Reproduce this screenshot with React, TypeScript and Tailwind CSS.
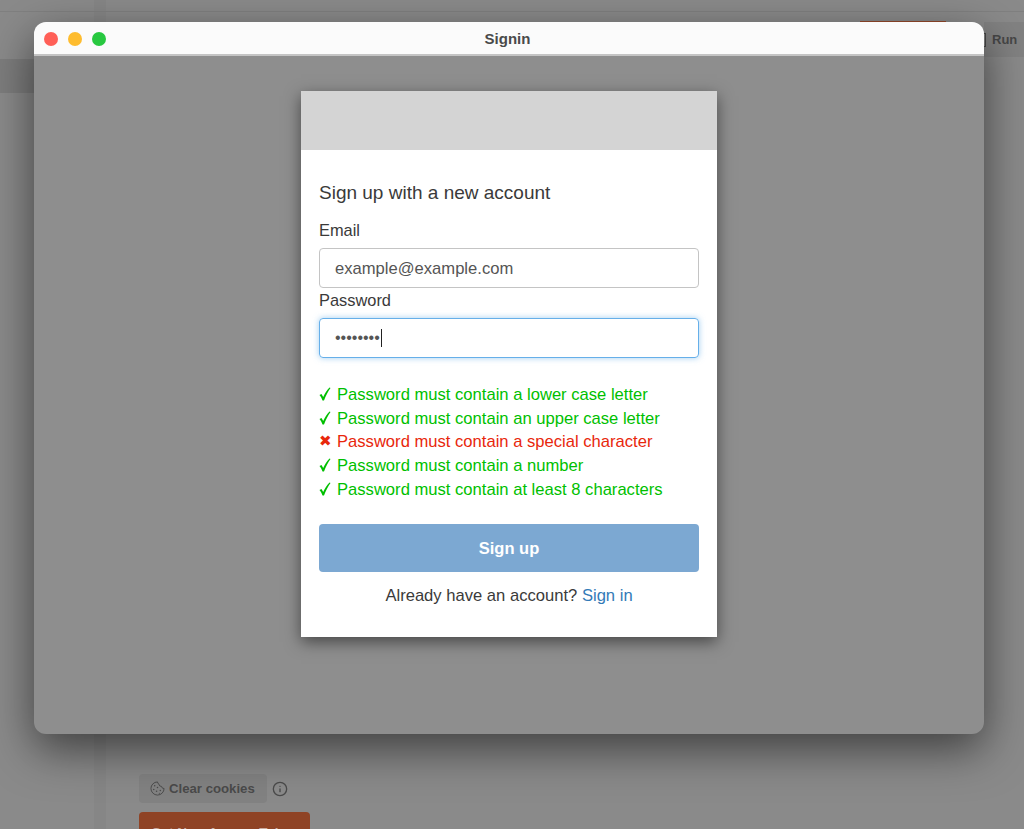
import React from 'react';
import { Info } from 'lucide-react';

const rules = [
  { ok: true, text: 'Password must contain a lower case letter' },
  { ok: true, text: 'Password must contain an upper case letter' },
  { ok: false, text: 'Password must contain a special character' },
  { ok: true, text: 'Password must contain a number' },
  { ok: true, text: 'Password must contain at least 8 characters' },
];

const CookieIcon = () => (
  <svg width="15" height="15" viewBox="0 0 16 16" fill="none" stroke="#4a4a4a" strokeWidth="1">
    <path d="M8 1a7 7 0 1 0 7 7 2.4 2.4 0 0 1-2.6-2.2A2.6 2.6 0 0 1 9.6 3.4 2.5 2.5 0 0 1 8 1z" />
    <g fill="#4a4a4a" stroke="none">
      <circle cx="5" cy="5" r="0.8" />
      <circle cx="8" cy="7" r="0.8" />
      <circle cx="4" cy="9" r="0.8" />
      <circle cx="7" cy="11" r="0.8" />
      <circle cx="11" cy="10" r="0.8" />
      <circle cx="10" cy="13" r="0.6" />
    </g>
  </svg>
);

const CheckIcon = () => (
  <svg width="12" height="14" viewBox="0 0 12 14" fill="#00bf00" className="mt-[4px]">
    <path d="M0.5 8 L2.5 7 L4.2 10 C6 6 8 3 10.5 0.5 L11.5 1 C9 4.5 6.5 9 5 13.5 L3.5 13.5 C2.8 11.5 1.8 9.5 0.5 8 Z" />
  </svg>
);

const App: React.FC = () => {
  return (
    <div className="relative w-[1024px] h-[829px] overflow-hidden bg-[#8a8a8a] font-['Liberation_Sans',Arial,sans-serif]">
      {/* Page behind the window, dimmed */}
      <div className="absolute left-0 top-[59px] w-[34px] h-[34px] bg-[#7d7d7d]" />
      <div className="absolute left-[94px] top-0 w-[12px] h-[829px] bg-[#868686]" />
      <div className="absolute left-0 top-[11px] w-[1024px] h-px bg-[#808080]" />
      <div className="absolute left-[860px] top-[21px] w-[86px] h-[2px] bg-[#96492b]" />
      <div className="absolute left-[984px] top-[22px] w-[40px] h-[35px] bg-[#828282] flex items-center gap-[6px] text-[13px] font-bold text-[#474747]">
        <span className="w-[2px] h-[14px] border-r border-y border-[#474747]" />
        <span>Run</span>
      </div>
      <div className="absolute left-[139px] top-[774px] flex items-center gap-[5px]">
        <div className="flex items-center gap-[4px] w-[128px] h-[29px] pl-[11px] rounded-[4px] bg-[#828282] text-[13.2px] font-bold text-[#4a4a4a]">
          <CookieIcon />
          <span>Clear cookies</span>
        </div>
        <Info size={16} color="#4a4a4a" />
      </div>
      <div className="absolute left-[139px] top-[812px] w-[171px] h-[30px] rounded-[4px] bg-[#8f4325] text-center pt-[11px] text-[13.5px] font-bold text-[#c9a99c]">
        Get New Access Token
      </div>

      {/* Signin window */}
      <div className="absolute left-[34px] top-[22px] w-[950px] h-[712px] flex flex-col rounded-[12px] bg-[#8e8e8e] shadow-[0_15px_45px_rgba(0,0,0,0.55)]">
        <div className="relative h-[34px] shrink-0 flex items-center justify-center pt-[1px] rounded-t-[12px] bg-[#fbfbfb] border-b-2 border-[#c4c4c4]">
          <div className="absolute left-[10px] top-[10px] flex gap-[10px]">
            <span className="w-[14px] h-[14px] rounded-full bg-[#ff5f57]" />
            <span className="w-[14px] h-[14px] rounded-full bg-[#febc2e]" />
            <span className="w-[14px] h-[14px] rounded-full bg-[#28c840]" />
          </div>
          <span className="text-[15px] font-bold text-[#4a4a4a] mr-[3px] mt-[1px]">Signin</span>
        </div>

        <div className="flex justify-center pt-[35px]">
          <div className="w-[416px] h-[546px] bg-white shadow-[0_5px_15px_rgba(0,0,0,0.5)]">
            <div className="h-[59px] bg-[#d4d4d4]" />
            <div className="px-[18px] pt-[31px] text-[#3a3a3a]">
              <h2 className="text-[19px] leading-[24px]">Sign up with a new account</h2>
              <label className="block mt-[13px] text-[16.4px] leading-[24px]">Email</label>
              <div className="mt-[6px] h-[40px] flex items-center px-[15px] pt-[2px] rounded-[4px] border border-[#c4c4c4] text-[16.6px] text-[#555555]">
                example@example.com
              </div>
              <label className="block mt-[1px] text-[16.4px] leading-[22px]">Password</label>
              <div className="mt-[7px] h-[40px] flex items-center px-[15px] rounded-[4px] border border-[#66afe9] shadow-[0_0_6px_rgba(102,175,233,0.6)] text-[16px] text-[#555555]">
                <span>••••••••</span>
                <span className="ml-[1px] w-px h-[18px] bg-[#222222]" />
              </div>
              <ul className="mt-[25px] text-[16.6px] leading-[23.7px]">
                {rules.map((rule) => (
                  <li key={rule.text} className={rule.ok ? 'flex text-[#00bf00]' : 'flex text-[#e8270c]'}>
                    <span className="w-[18px] shrink-0 font-bold font-['DejaVu_Sans',sans-serif] text-[15px]">
                      {rule.ok ? <CheckIcon /> : '✖'}
                    </span>
                    <span>{rule.text}</span>
                  </li>
                ))}
              </ul>
              <button className="block w-full h-[48px] mt-[22px] pt-[2px] rounded-[4px] bg-[#7ca8d2] text-[16.5px] font-bold text-white">
                Sign up
              </button>
              <p className="mt-[12px] text-center text-[16.6px] leading-[24px]">
                Already have an account? <span className="text-[#337ab7]">Sign in</span>
              </p>
            </div>
          </div>
        </div>
      </div>
    </div>
  );
};

export default App;
